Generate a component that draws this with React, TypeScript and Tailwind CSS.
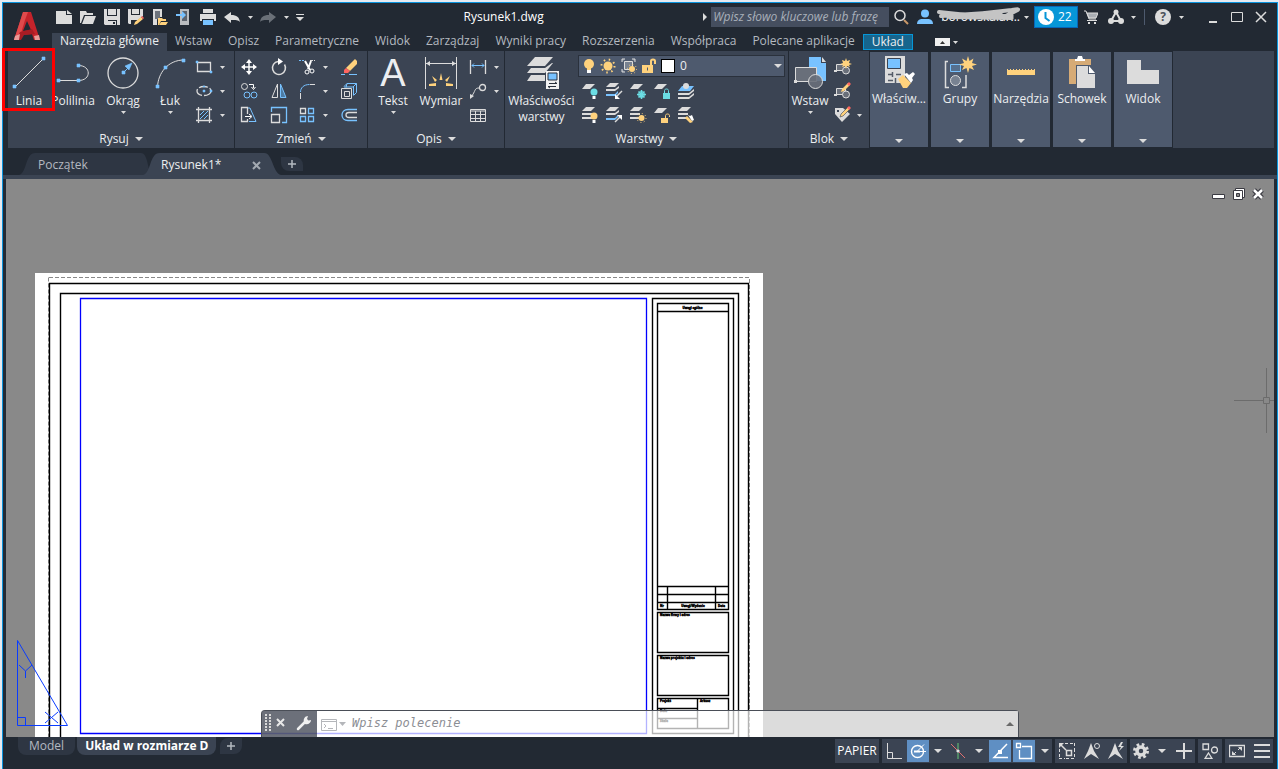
import type { ReactNode } from "react"

const L = "#dcdcdc"
const B = "#78c2ff"
const Y = "#ffd27d"
const R = "#ff6560"
const T = "#6bdde4"

type IconProps = { w?: number; h?: number; children: ReactNode }

function Icon({ w = 16, h = w, children }: IconProps) {
  return (
    <svg width={w} height={h} viewBox={`0 0 ${w} ${h}`} fill="none" stroke={L} aria-hidden="true" className="block shrink-0">
      {children}
    </svg>
  )
}

function Caret({ big = false }: { big?: boolean }) {
  return big ? (
    <Icon w={8} h={4}><path d="M0 0h8L4 4z" fill={L} stroke="none" /></Icon>
  ) : (
    <Icon w={5} h={3}><path d="M0 0h5L2.500 3z" fill={L} stroke="none" /></Icon>
  )
}

/* ---------- quick access ---------- */

const quickIcons: { label: string; icon: ReactNode }[] = [
  { label: "Nowy", icon: <Icon><path d="M0 2h10v4h6v9H0z" fill={L} stroke="none" /><path d="M11 1l5 4h-5z" fill={L} stroke="none" /></Icon> },
  { label: "Otwórz", icon: <Icon><path d="M0 2h6l1 2h6v2H4L1 14H0z" fill={L} stroke="none" /><path d="M5 7h11l-3 8H2z" fill={L} stroke="none" /></Icon> },
  { label: "Zapisz", icon: <Icon><path d="M0 0h3v7h10V0h3v16h-3v-5H4v5H1l-1-1z" fill={L} stroke="none" /><path d="M4 0h8v6H4zM4 12h8v4H4z" fill={L} stroke="none" /><path d="M9 13h2v2H9z" fill="#222933" stroke="none" /></Icon> },
  { label: "Zapisz jako", icon: <Icon><path d="M0 0h3v6h9V0h3v7l-5 4H3v4H1l-1-1z" fill={L} stroke="none" /><path d="M4 0h7v5H4z" fill={L} stroke="none" /><path d="M7 13l6-5 2 2-6 5-3 1z" fill={Y} stroke="none" /><path d="M13 8l1-1 2 2-1 1z" fill={R} stroke="none" /></Icon> },
  { label: "Otwórz z aplikacji", icon: <Icon><path d="M1 0h9v8H6l-1 3v5H1z" fill={L} stroke="none" /><path d="M3 2h5v8H3z" fill="#6d737c" stroke="none" /><path d="M6 9h4l1 1h3v2H9l-2 4H6z" fill={Y} stroke="none" /><path d="M9 13h7l-2 3H7z" fill={Y} stroke="none" /></Icon> },
  { label: "Zapisz w aplikacji", icon: <Icon><path d="M4 0h9v16H4z" fill="#b9bcc0" stroke="none" /><path d="M6 2h5v10H6z" fill="#5d646e" stroke="none" /><path d="M0 5h6V2l4 4-4 4V7H0z" fill={B} stroke="none" /></Icon> },
  { label: "Drukuj", icon: <Icon><path d="M3 0h10v4H3zM0 5h16v7h-2v-2H2v2H0z" fill={L} stroke="none" /><path d="M3 11h10v5H3z" fill={B} stroke="none" /></Icon> },
]

/* ---------- large ribbon icons ---------- */

const lineIcon = (
  <Icon w={34}><path d="M3 31L31 3" /><path d="M1 29h3v3H1zM30 1h3v3h-3z" fill={B} stroke={B} strokeWidth=".6" /></Icon>
)
const polylineIcon = (
  <Icon w={34}><path d="M2.500 24.500h20c13 0 13-15 0-15" /><path d="M1 23h3v3H1zM21 23h3v3h-3zM21 8h3v3h-3z" fill={B} stroke={B} strokeWidth=".6" /></Icon>
)
const circleIcon = (
  <Icon w={34}><circle cx="17" cy="17" r="15" strokeWidth="1.300" /><path d="M17 17l7-7" stroke={B} /><path d="M26 7l-7 3 4 4zM16 15h3v3h-3z" fill={B} stroke={B} strokeWidth=".6" /></Icon>
)
const arcIcon = (
  <Icon w={34}><path d="M4.500 31C5 17 15 4 31 4" /><path d="M3 29h3v3H3zM11 10h3v3h-3zM29 3h3v3h-3z" fill={B} stroke={B} strokeWidth=".6" /></Icon>
)
const dimensionIcon = (
  <Icon w={34}>
    <path d="M1.500 1v32M32.500 1v32" /><path d="M2 7.500h30" />
    <path d="M2 7.500l4-2.500v5zM32 7.500l-4-2.500v5z" fill={L} stroke="none" />
    <path d="M17 17l1.500 7h-3zM8 20l5 4-2 2zM26 20l-5 4 2 2zM5 28l7-1v3H5zM29 28l-7-1v3h7z" fill={Y} stroke="none" />
  </Icon>
)
const layerPropsIcon = (
  <Icon w={34}>
    <path d="M10 1h18l-8 9H2z" fill={L} stroke="none" />
    <path d="M6 12h14l7-5h1l-8 10H2z" fill={L} stroke="none" />
    <path d="M6 19h14v6H2z" fill={L} stroke="none" />
    <path d="M21 15h13v18H21z" fill="#f2f2f2" stroke="none" />
    <path d="M23 17h9v7h-9z" fill={B} stroke="#2a313c" />
    <path d="M24 27.500h8l-2-1.500M31 30.500h-8l2 1.500" stroke="#2a313c" />
  </Icon>
)
const insertIcon = (
  <Icon w={34}>
    <path d="M16 1h12v6h5v18H16z" fill={B} stroke="none" /><path d="M29 1l4 5h-4z" fill={L} stroke="none" />
    <path d="M2.500 11.500h21v14h-21z" fill="#696f7a" /><path d="M1 24h3v3H1z" fill={L} stroke="none" />
    <circle cx="22.500" cy="25.500" r="7" fill="#696f7a" fillOpacity=".9" />
  </Icon>
)

/* ---------- collapsed panels ---------- */

const collapsed: { label: string; icon: ReactNode }[] = [
  {
    label: "Właściw...",
    icon: (
      <Icon w={34}>
        <path d="M3 1h20v27H3z" fill={L} stroke="none" /><path d="M5.500 3.500h13v10h-13z" fill={B} stroke="#3b4453" />
        <path d="M6 19.500h5M14 19.500h5M6 25.500h5M10.500 17v5M13.500 23v5" stroke="#555c68" strokeWidth="1.500" />
        <path d="M16 24l5-4 8 8-4 5h-4z" fill={Y} stroke="none" />
        <path d="M22 19l3-1 2 2 4-3 2 2-3 4 1 2-2 3z" fill="#fff" stroke="none" />
      </Icon>
    ),
  },
  {
    label: "Grupy",
    icon: (
      <Icon w={34}>
        <path d="M5 6.500H2.500v26H6M19 32.500h4V20" strokeWidth="1.500" />
        <path d="M7.500 9.500h10v7h-10z" fill="#55708f" stroke={B} /><circle cx="12.500" cy="25.500" r="5" fill="#788291" />
        <path d="M25 1l1.500 5 4-2.500-1.500 4.500 5 1.500-5 1.500 2 4-4.500-2L25 18l-1.500-5-4.500 2 2-4-5-1.500 5-1.500-2-4.500 4.500 2.500z" fill={Y} stroke="none" />
      </Icon>
    ),
  },
  {
    label: "Narzędzia",
    icon: (
      <Icon w={34}>
        <path d="M3 15h28v5H3z" fill={Y} stroke="none" />
        <path d="M3.500 14v2M6.500 14v2M9.500 14v2M12.500 14v2M15.500 14v2M18.500 14v2M21.500 14v2M24.500 14v2M27.500 14v2M30.500 14v2" stroke={Y} />
      </Icon>
    ),
  },
  {
    label: "Schowek",
    icon: (
      <Icon w={34}>
        <path d="M4 4h22v6H11v19H4z" fill="#d6ab76" stroke="none" /><path d="M10 4h2l1-3h4l1 3h2v2H10z" fill="#fff" stroke="none" />
        <path d="M12 11h11v8h7v14H12z" fill={L} stroke="none" /><path d="M24 11l6 7h-6z" fill="#fff" stroke="none" />
      </Icon>
    ),
  },
  { label: "Widok", icon: <Icon w={34}><path d="M1 5h14v10h18v14H1z" fill={L} stroke="none" /></Icon> },
]

/* ---------- small ribbon icons ---------- */

type Tool = { label: string; icon: ReactNode; caret?: boolean }

const drawTools: Tool[] = [
  { label: "Prostokąt", caret: true, icon: <Icon w={18}><path d="M2.500 4.500h13v9h-13z" strokeWidth="1.300" /><path d="M1 3h2v2H1zM15 13h2v2h-2z" fill={B} stroke={B} strokeWidth=".5" /></Icon> },
  { label: "Elipsa", caret: true, icon: <Icon w={18}><ellipse cx="9" cy="9" rx="7" ry="4.500" strokeWidth="1.300" strokeDasharray="9 2" /><path d="M8 8h2v2H8zM15 8h2v2h-2zM8 4h2v1H8z" fill={B} stroke={B} strokeWidth=".5" /></Icon> },
  { label: "Kreskowanie", caret: true, icon: <Icon w={18}><path d="M1 3.500h16M1 14.500h16M3.500 1v16M14.500 1v16" strokeWidth="1.300" /><path d="M5 9l4-4M5 13l8-8M9 13l4-4" stroke={B} /></Icon> },
]

const modifyTools: Tool[] = [
  { label: "Przesuń", icon: <Icon w={18}><path d="M9 3v12M3 9h12" stroke="#fff" strokeWidth="1.500" /><path d="M9 1l3 4H6zM9 17l3-4H6zM1 9l4-3v6zM17 9l-4-3v6z" fill="#fff" stroke="none" /></Icon> },
  { label: "Obróć", icon: <Icon w={18}><path d="M8 3.500a6.500 6.500 0 1 0 6.500 3" strokeWidth="1.500" /><path d="M8 0l5 3.500L8 7z" fill="#fff" stroke="none" /></Icon> },
  { label: "Utnij", caret: true, icon: <Icon w={18}><path d="M1 2.500h6" stroke={B} strokeDasharray="2 1" /><path d="M12 2.500h5" strokeDasharray="3 1" /><path d="M7 3l5 9M13 3l-3 8" stroke="#fff" strokeWidth="2" /><circle cx="9" cy="14" r="2" stroke="#fff" /><circle cx="14" cy="13" r="2" stroke="#fff" /></Icon> },
  { label: "Wymaż", icon: <Icon w={18}><path d="M6 10L15 1l2 2v3l-7 7z" fill={Y} stroke="none" /><path d="M4 12l2-2 4 3-2 2H4z" fill={R} stroke="none" /><path d="M1 16.500h4M9 16.500h8" stroke={B} /></Icon> },
  { label: "Kopiuj", icon: <Icon w={18}><circle cx="4.500" cy="4.500" r="3" /><path d="M9 2.500h4.500V6M11.500 5l2 2.500 2-2.500" stroke="#fff" /><circle cx="7" cy="13" r="3" stroke={B} /><circle cx="14" cy="13" r="3" stroke={B} /></Icon> },
  { label: "Lustro", icon: <Icon w={18}><path d="M7.500 2v13.500H2z" /><path d="M10.500 2v13.500H16z" stroke={B} fill="#4d7ba3" /></Icon> },
  { label: "Zaokrąglij", caret: true, icon: <Icon w={18}><path d="M2.500 17v-6M12 2.500h5" /><path d="M2.500 10c0-4 3-7.500 9-7.500" stroke={B} /></Icon> },
  { label: "Rozbij", icon: <Icon w={18}><path d="M1.500 6.500h10v10h-10zM4.500 9.500h5v5h-5z" /><path d="M4 4.500L7 1.500h9.500v9l-3 3M13 5l3.500-3.500M7 1.500l-1 4M13.500 13V5H4" stroke={B} /></Icon> },
  { label: "Rozciągnij", icon: <Icon w={18}><path d="M7.500 8V1.500h-6v14h6V13" strokeWidth="1.300" /><path d="M8 2h2l6 13.500H9" stroke={B} /><path d="M5 10.500h6M9 8l3 2.500L9 13" stroke="#fff" /></Icon> },
  { label: "Skala", icon: <Icon w={18}><path d="M1.500 8.500h8v8h-8z" strokeWidth="1.300" /><path d="M1.500 6V1.500h15v15H12" stroke={B} strokeWidth="1.300" /></Icon> },
  { label: "Szyk", caret: true, icon: <Icon w={18}><path d="M2.500 2.500h5v5h-5z" strokeWidth="1.300" /><path d="M10.500 2.500h5v5h-5zM2.500 10.500h5v5h-5zM10.500 10.500h5v5h-5z" stroke={B} strokeWidth="1.300" /></Icon> },
  { label: "Odsuń", icon: <Icon w={18}><path d="M17 3.500H8c-8 0-8 11 0 11h9" stroke={B} strokeWidth="1.300" /><path d="M17 6.500H9c-4 0-4 5 0 5h8" strokeWidth="1.300" /></Icon> },
]

const annotationTools: Tool[] = [
  { label: "Liniowy", caret: true, icon: <Icon w={18}><path d="M1.500 2v14M16.500 2v14" strokeWidth="1.300" /><path d="M3 7.500h12M5 5.500l-2 2 2 2M13 5.500l2 2-2 2" stroke={B} /></Icon> },
  { label: "Linia odniesienia", caret: true, icon: <Icon w={18}><circle cx="13.500" cy="5.500" r="3" strokeWidth="1.300" /><path d="M10 6C5 6 7 9 2 15" /><path d="M1 17v-5l4 2z" fill={L} stroke="none" /></Icon> },
  { label: "Tabela", icon: <Icon w={18}><path d="M1.500 3.500h15v12h-15zM1.500 5h15M1.500 8.500h15M1.500 12.500h15M6.500 5v11M11.500 5v11" /></Icon> },
]

const sheet = <path d="M5 2h9l-5 5H1z" fill={L} stroke="none" />
const stack = <path d="M5 1h9l-4 4H1zM1 7h10v2H1zM1 11h10v2H1z" fill={L} stroke="none" />

const layerTools: Tool[][] = [
  [
    { label: "Wyłącz", icon: <Icon w={18}>{sheet}<circle cx="13" cy="10" r="3.500" fill={T} stroke="none" /><path d="M11.500 14h3v3h-3z" fill="#fff" stroke="none" /></Icon> },
    { label: "Izoluj", icon: <Icon w={18}><path d="M5 1h9l-4 4H1zM1 7h9l4-3v2l-4 3H1z" fill={L} stroke="none" /><path d="M1 12h9l3-3v2l-3 3H1z" fill={B} stroke="none" /><path d="M17 9l-6 6" strokeWidth="1.500" /><path d="M10 17v-5l5 5z" fill="#fff" stroke="none" /></Icon> },
    { label: "Zablokuj", icon: <Icon w={18}>{sheet}<path d="M12.500 8v9M8 12.500h9M9.500 9.500l6 6M15.500 9.500l-6 6" stroke={T} strokeWidth="1.500" /><circle cx="12.500" cy="12.500" r="3" stroke={T} /></Icon> },
    { label: "Zamknij", icon: <Icon w={18}>{sheet}<path d="M10 11h7v6h-7z" fill={T} stroke="none" /><path d="M11.500 11V8.500c0-2 4-2 4 0V11" stroke={T} /></Icon> },
    { label: "Ustaw aktualną", icon: <Icon w={18}><path d="M5 4h12l-4 5H1z" fill={B} stroke="none" /><circle cx="9" cy="4" r="3" fill={L} stroke="none" /><path d="M1 11h11l5-4v2l-5 4H1zM1 15h11l5-4v2l-5 4H1z" fill={L} stroke="none" /></Icon> },
  ],
  [
    { label: "Włącz wszystkie", icon: <Icon w={18}>{stack}<circle cx="13" cy="10" r="3.500" fill={Y} stroke="none" /><path d="M11.500 14h3v3h-3z" fill="#fff" stroke="none" /></Icon> },
    { label: "Usuń izolację", icon: <Icon w={18}><path d="M5 1h9l-4 4H1zM1 7h9l4-3v2l-4 3H1z" fill={L} stroke="none" /><path d="M1 12h9l3-3v2l-3 3H1z" fill={B} stroke="none" /><path d="M10 16l6-6" strokeWidth="1.500" /><path d="M17 9v5l-5-5z" fill="#fff" stroke="none" /></Icon> },
    { label: "Odblokuj wszystkie", icon: <Icon w={18}>{stack}<circle cx="12.500" cy="12" r="3" fill={Y} stroke="none" /><circle cx="12.500" cy="12" r="4.500" stroke={Y} strokeDasharray="1 2.500" /></Icon> },
    { label: "Otwórz warstwę", icon: <Icon w={18}>{sheet}<path d="M8 12h7v5H8z" fill={Y} stroke="none" /><path d="M12.500 12V9.500c0-2 4-2 4 0V11" stroke={Y} /></Icon> },
    { label: "Dopasuj warstwę", icon: <Icon w={18}>{stack}<path d="M8 12l2-2 6 6-3 1z" fill={Y} stroke="none" /><path d="M11 9l2 1 2-1 2 5-2 1z" fill="#fff" stroke="none" /></Icon> },
  ],
]

const blockBase = (
  <>
    <path d="M2.500 6.500h9v6h-9z" fill="#696f7a" /><circle cx="12" cy="12.500" r="3.500" fill="#696f7a" /><path d="M0 12h3v2H0z" fill={L} stroke="none" />
  </>
)
const blockTools: Tool[] = [
  { label: "Utwórz", icon: <Icon w={18}>{blockBase}<path d="M12 0l1 3 3-1-1 3 3 1-3 1 1 2-3-1-1 3-1-3-3 1 1-2-3-1 3-1-1-3 3 1z" fill={Y} stroke="none" /></Icon> },
  { label: "Edytor bloków", icon: <Icon w={18}>{blockBase}<path d="M8 7l6-6 2 2-6 6-3 1z" fill={Y} stroke="none" /><path d="M13 2l2-2 2 2-2 2z" fill={R} stroke="none" /></Icon> },
  { label: "Edycja atrybutów", caret: true, icon: <Icon w={18}><path d="M1 2h8l7 6-8 8-7-8z" fill={L} stroke="none" /><path d="M3 4h2v2H3z" fill="#3b4453" stroke="none" /><path d="M7 8l7-7 2 2-7 7-3 1z" fill={Y} stroke="#3b4453" strokeWidth=".6" /><path d="M13 2l2-2 2 2-2 2z" fill={R} stroke="none" /></Icon> },
]

/* ---------- ribbon pieces ---------- */

function SmallTool({ label, icon, caret, className = "w-7" }: Tool & { className?: string }) {
  return (
    <div className="flex h-6 items-center">
      <button type="button" aria-label={label} className={`flex h-6 items-center justify-center ${className}`}>{icon}</button>
      {caret && <button type="button" aria-label={`${label}: więcej`} className="flex h-6 w-2 items-center justify-center"><Caret /></button>}
    </div>
  )
}

function BigTool({ label, icon, caret, className }: { label: ReactNode; icon: ReactNode; caret?: boolean; className: string }) {
  return (
    <button type="button" className={`flex shrink-0 flex-col items-center pt-1 leading-4 ${className}`}>
      <span className="flex h-9 items-center justify-center">{icon}</span>
      <span className="mt-0.5 whitespace-nowrap">{label}</span>
      {caret && <span className="mt-0.5"><Caret /></span>}
    </button>
  )
}

function Panel({ title, className, children }: { title: string; className: string; children: ReactNode }) {
  return (
    <section className={`flex shrink-0 flex-col bg-[#3b4453] ${className}`}>
      <div className="flex flex-1">{children}</div>
      <button type="button" className="flex h-[18px] items-center justify-center gap-1.5 leading-4">
        {title}
        <Caret big />
      </button>
    </section>
  )
}

function Ribbon() {
  return (
    <div className="relative flex h-[97px] gap-px pl-[5px] pr-[3px] text-[#eceef0]">
      <Panel title="Rysuj" className="w-[226px]">
        <BigTool label="Linia" icon={lineIcon} className="w-[42px]" />
        <BigTool label="Polilinia" icon={polylineIcon} className="w-[46px]" />
        <BigTool label="Okrąg" icon={circleIcon} caret className="w-[54px]" />
        <BigTool label="Łuk" icon={arcIcon} caret className="w-10" />
        <div className="pt-1">{drawTools.map((t) => <SmallTool key={t.label} {...t} />)}</div>
      </Panel>

      <Panel title="Zmień" className="w-[132px]">
        <div className="grid auto-rows-[24px] grid-cols-[30px_28px_42px_28px] pt-1">
          {modifyTools.map((t) => <SmallTool key={t.label} {...t} />)}
        </div>
      </Panel>

      <Panel title="Opis" className="w-[136px]">
        <BigTool label="Tekst" icon={<span aria-hidden="true" className="font-['Liberation_Sans',sans-serif] text-[38px] leading-9">A</span>} caret className="w-[50px]" />
        <BigTool label="Wymiar" icon={dimensionIcon} className="w-[46px]" />
        <div className="pt-1">{annotationTools.map((t) => <SmallTool key={t.label} {...t} />)}</div>
      </Panel>

      <Panel title="Warstwy" className="w-[283px]">
        <BigTool label={<>Właściwości<br />warstwy</>} icon={layerPropsIcon} className="w-[73px]" />
        <div className="flex flex-1 flex-col pr-[3px] pt-1">
          <div className="mb-0.5 flex h-[22px] items-center gap-[5px] border border-[#2a313c] bg-[#4e5a6e] pl-1 pr-0.5">
            <Icon w={12} h={16}><circle cx="6" cy="6" r="5" fill={Y} stroke="none" /><path d="M4 10h4v2H4z" fill={Y} stroke="none" /><path d="M4 12h4v3H4z" fill="#fff" stroke="none" /></Icon>
            <Icon><circle cx="8" cy="8" r="4.500" fill={Y} stroke="none" /><circle cx="8" cy="8" r="6.500" stroke={Y} strokeDasharray="1.500 3.600" strokeWidth="2" /></Icon>
            <Icon><path d="M1 4V1h3M11 1h3v3M1 11v3h3M3.500 3.500h8v8h-8z" fill="#788291" /><circle cx="11" cy="11" r="3" fill={Y} stroke="none" /><circle cx="11" cy="11" r="4.500" stroke={Y} strokeDasharray="1 2.500" /></Icon>
            <Icon w={14} h={16}><path d="M0 7h11v8H0z" fill={Y} stroke="none" /><path d="M9 7V3c0-2 4-2 4 0v3" stroke={Y} strokeWidth="2" /><path d="M5.500 9.500v3" stroke="#4e5a6e" /></Icon>
            <span className="size-3.5 border border-black bg-white" />
            <select aria-label="Warstwa" className="h-5 min-w-0 flex-1 appearance-none bg-transparent leading-5 outline-none">
              <option>0</option>
            </select>
            <Caret big />
          </div>
          {layerTools.map((row, i) => (
            <div key={i} className="flex">
              {row.map((t) => <SmallTool key={t.label} {...t} className="w-6" />)}
            </div>
          ))}
        </div>
      </Panel>

      <Panel title="Blok" className="w-20">
        <BigTool label="Wstaw" icon={insertIcon} caret className="w-[42px]" />
        <div className="pt-1">{blockTools.map((t) => <SmallTool key={t.label} {...t} className="w-6" />)}</div>
      </Panel>

      <div className="flex gap-[3px] pt-px pb-px">
        {collapsed.map((p) => (
          <button key={p.label} type="button" className="flex w-[58px] flex-col items-center bg-[#4e5a6e] pt-[3px] leading-4">
            {p.icon}
            <span className="mt-0.5 whitespace-nowrap">{p.label}</span>
            <span className="mt-auto mb-1"><Caret big /></span>
          </button>
        ))}
      </div>
      <div className="flex-1 bg-[#3b4453]" />

      <div className="pointer-events-none absolute -left-px -top-[3px] h-[63px] w-[53px] border-[3px] border-[#ff0000]" />
    </div>
  )
}

/* ---------- title bar ---------- */

const ribbonTabs = ["Narzędzia główne", "Wstaw", "Opisz", "Parametryczne", "Widok", "Zarządzaj", "Wyniki pracy", "Rozszerzenia", "Współpraca", "Polecane aplikacje"]

function Header() {
  return (
    <header className="flex h-12 pl-[5px]">
      <button type="button" aria-label="Menu aplikacji" className="flex w-11 justify-start pl-1.5 pt-2">
        <Icon w={28} h={30}>
          <path d="M9 1h8l9 28h-6l-2-6-9 1-3 5H0z" fill="#c5232b" stroke="none" />
          <path d="M9 1h5l-3 8-6 20H0z" fill="#e04a4c" stroke="none" />
          <path d="M13 10l4 9-8 1z" fill="#222933" stroke="none" />
          <path d="M6 21l12-3 3 5-11 1-3 5H2z" fill="#a81c24" stroke="none" />
          <path d="M1 25l5-2-1 6H0zM20 25l5-1 1 5h-5z" fill="#e99a98" stroke="none" />
        </Icon>
      </button>
      <div className="flex min-w-0 flex-1 flex-col">
        <div className="flex h-[30px] items-center pb-0.5 text-white">
          {quickIcons.map((q) => (
            <button key={q.label} type="button" aria-label={q.label} className="flex w-6 justify-center">{q.icon}</button>
          ))}
          <button type="button" aria-label="Cofnij" className="flex w-6 justify-center"><Icon><path d="M0 8l7-5v3c6 0 8 2 9 7-2-2-4-2-9-2v3z" fill={L} stroke="none" /></Icon></button>
          <button type="button" aria-label="Lista cofnięć" className="flex w-3 justify-center"><Caret /></button>
          <button type="button" aria-label="Ponów" className="flex w-6 justify-center"><Icon><path d="M16 8L9 3v3c-6 0-8 2-9 7 2-2 4-2 9-2v3z" fill="#6a7078" stroke="none" /></Icon></button>
          <button type="button" aria-label="Lista ponowień" className="flex w-3 justify-center"><Caret /></button>
          <button type="button" aria-label="Dostosuj" className="flex w-4 justify-center"><Icon w={8}><path d="M0 1.500h8" /><path d="M0 4h8L4 8z" fill={L} stroke="none" /></Icon></button>

          <h1 className="flex-1 text-center leading-4">Rysunek1.dwg</h1>

          <Icon w={12}><path d="M4 2l4 4-4 4z" fill={L} stroke="none" /></Icon>
          <input aria-label="Szukaj" placeholder="Wpisz słowo kluczowe lub frazę" className="h-5 w-[178px] bg-[#454e5f] px-0.5 italic leading-5 outline-none placeholder:text-[#a9b0ba]" />
          <button type="button" aria-label="Znajdź" className="flex w-6 justify-center"><Icon><circle cx="7" cy="6.500" r="5" strokeWidth="1.500" /><path d="M11 11l4 4" stroke="#c99868" strokeWidth="2" /></Icon></button>
          <button type="button" className="flex items-center">
            <span className="flex w-6 justify-center"><Icon><circle cx="8" cy="4.500" r="4" fill={B} stroke="none" /><path d="M0 15c0-4 3-5 5-5h6c2 0 5 1 5 5z" fill={B} stroke="none" /></Icon></span>
            <span className="relative whitespace-nowrap pl-1 text-left leading-5">
              borowskalar...
              <svg viewBox="0 0 82 14" preserveAspectRatio="none" fill="none" stroke="#c4c4c4" strokeWidth="4" strokeLinecap="round" className="absolute left-0 top-0 h-3.5 w-full" aria-hidden="true">
                <path d="M2 5l28 3 44-5c7-1 8-1 4 1l-12 6M4 9l60-4M12 10l62 1M34 7l40 2" />
              </svg>
            </span>
            <span className="flex w-3 justify-center"><Caret /></span>
          </button>
          <button type="button" aria-label="Pozostało dni: 22" className="ml-0.5 flex h-[22px] w-11 items-center gap-1 border border-[#0766b8] bg-[#0696d7] pl-[3px] leading-4">
            <Icon><circle cx="8" cy="8" r="8" fill="#fff" stroke="none" /><path d="M7.500 3v6l4 3" stroke="#0696d7" strokeWidth="2" /></Icon>
            22
          </button>
          <button type="button" aria-label="Sklep" className="flex w-[26px] justify-center"><Icon w={14}><path d="M0 1h2l3 8h7" /><path d="M3 3h11l-2 5H5z" fill="#a9adb3" stroke={L} /><path d="M3 10.500h10" /><path d="M4 12h2v2H4zM10 12h2v2h-2z" fill={L} stroke="none" /></Icon></button>
          <button type="button" aria-label="Autodesk App Store" className="flex w-6 justify-center"><Icon><path d="M8 3L3 12h10z" strokeWidth="2" /><circle cx="8" cy="3" r="2.500" fill={L} stroke="none" /><circle cx="3" cy="12" r="3" fill={L} stroke="none" /><circle cx="13" cy="12" r="3" fill={L} stroke="none" /></Icon></button>
          <button type="button" aria-label="Aplikacje" className="flex w-2.5 justify-center"><Caret /></button>
          <span className="mx-1.5 h-4 w-px bg-[#4e5a6e]" />
          <button type="button" aria-label="Pomoc" className="flex w-6 justify-center"><span className="flex size-4 items-center justify-center rounded-full bg-[#dcdcdc] font-bold leading-4 text-[#4b515a]">?</span></button>
          <button type="button" aria-label="Menu pomocy" className="flex w-3 justify-center"><Caret /></button>
          <button type="button" aria-label="Minimalizuj" className="ml-3.5 flex w-6 justify-center"><Icon w={12}><path d="M2 11h8" strokeWidth="2" /></Icon></button>
          <button type="button" aria-label="Maksymalizuj" className="flex w-6 justify-center"><Icon w={12}><path d="M.5 1.500h11v9H.5z" /></Icon></button>
          <button type="button" aria-label="Zamknij" className="mr-1 flex w-6 justify-center"><Icon w={12}><path d="M1 1l10 10M11 1L1 11" strokeWidth="1.500" /></Icon></button>
        </div>
        <nav className="flex h-[18px] items-center whitespace-nowrap leading-4 text-[#b4b9c0]">
          {ribbonTabs.map((t, i) => (
            <a key={t} href="#" className={i === 0 ? "h-full bg-[#3b4453] px-2 text-[#eceef0]" : "h-full px-2"}>{t}</a>
          ))}
          <a href="#" className="h-4 border border-[#0696d7] bg-[#17658d] px-2 leading-[14px] text-[#eceef0]">Układ</a>
          <button type="button" aria-label="Zwiń wstążkę" className="ml-[22px] flex h-2 w-[15px] items-center justify-center bg-[#f0f0f0]"><Icon w={5} h={3}><path d="M0 3h5L2.500 0z" fill="#333" stroke="none" /></Icon></button>
          <button type="button" aria-label="Opcje wstążki" className="flex w-3 justify-center"><Caret /></button>
        </nav>
      </div>
    </header>
  )
}

/* ---------- document tabs ---------- */

function FileTabs() {
  return (
    <div className="flex h-[31px] items-end border-b-4 border-[#3b4453] pl-4 leading-4 text-[#b4b9c0]">
      <div className="relative flex h-[22px] w-[134px] items-center pt-0.5">
        <svg viewBox="0 0 132 22" preserveAspectRatio="none" className="absolute inset-0 h-full w-full" aria-hidden="true"><path d="M0 22C8 20 6 0 16 0h104c8 0 6 20 12 22z" fill="#2e3643" /></svg>
        <a href="#" className="relative pl-[19px]">Początek</a>
      </div>
      <div className="relative -ml-2.5 flex h-[22px] w-[138px] items-center pt-0.5">
        <svg viewBox="0 0 132 22" preserveAspectRatio="none" className="absolute inset-0 h-full w-full" aria-hidden="true"><path d="M0 22C8 20 6 0 16 0h100c8 0 8 20 16 22z" fill="#3b4453" /></svg>
        <a href="#" className="relative flex-1 pl-[18px] text-[#eceef0]">Rysunek1*</a>
        <button type="button" aria-label="Zamknij kartę" className="relative mr-5"><Icon w={9}><path d="M1 1l7 7M8 1L1 8" stroke="#a3a9b1" strokeWidth="2" /></Icon></button>
      </div>
      <button type="button" aria-label="Nowy rysunek" className="relative mb-1 flex h-3.5 w-[22px] items-center justify-center rounded-tr-lg rounded-bl-lg bg-[#2e3643]">
        <Icon w={8}><path d="M4 0v8M0 4h8" stroke="#b4b9c0" strokeWidth="1.500" /></Icon>
      </button>
    </div>
  )
}

/* ---------- drawing area ---------- */

function Drawing() {
  return (
    <svg className="absolute inset-0 h-full w-full" role="img" aria-label="Układ w rozmiarze D">
      <g transform="translate(-6 -179)" fill="none" stroke="#000">
        <path d="M35 273h728v600H35z" fill="#fff" stroke="none" />
        <path d="M49 277.500h700.500V860M48.500 277.500V860" stroke="#888" strokeDasharray="4 2" />
        <path d="M49.500 860V283.500h699V860M60.500 860V293.500h678V860" strokeWidth="1.400" />
        <path d="M80.500 298.500h566v435h-566z" stroke="#0000ff" strokeWidth="1.300" />
        <g strokeWidth="1.400">
          <path d="M652.500 298.500h81v435h-81z" />
          <path d="M657.500 303.500h71v306h-71zM657.500 311.500h71M657.500 586.500h71M657.500 594.500h71M657.500 602.500h71M667.500 586.500v23M715.500 586.500v23" />
          <path d="M657.500 612.500h71v40h-71zM657.500 655.500h71v40h-71zM657.500 698.500h71v30h-71zM697.500 698.500v30M657.500 708.500h40M657.500 718.500h40" />
        </g>
        <g fill="#000" stroke="#000" strokeWidth=".4" fontSize="3" fontWeight="700">
          <text x="692.500" y="309" textAnchor="middle">Uwagi ogólne</text>
          <text x="662" y="607" textAnchor="middle">Nr</text>
          <text x="693" y="607" textAnchor="middle">Uwagi/Wydanie</text>
          <text x="721.500" y="607" textAnchor="middle">Data</text>
          <text x="660" y="616">Nazwa firmy i adres</text>
          <text x="660" y="659">Nazwa projektu i adres</text>
          <text x="660" y="702">Projekt</text>
          <text x="700" y="702">Arkusz</text>
          <text x="660" y="712">Data</text>
          <text x="660" y="722">Skala</text>
        </g>
        <g stroke="#0a3cff">
          <path d="M17.500 640.500v85h50zM17.500 717.500h8v8" />
          <path d="M19 665l6.500 6M32 665l-6.500 6v7M45 712l13 11M58 712l-13 11" />
        </g>
      </g>
    </svg>
  )
}

function Crosshair() {
  return (
    <div className="absolute right-0 top-[188px]">
      <Icon w={40} h={66}>
        <path d="M0 33.500h29M36 33.500h4M32.500 1v29M32.500 37v29M29.500 30.500h6v6h-6z" stroke="#6c6c6c" />
      </Icon>
    </div>
  )
}

function Canvas() {
  return (
    <main className="relative mx-[3px] min-h-0 flex-1 overflow-hidden bg-[#898989]">
      <Drawing />
      <Crosshair />
      <div className="absolute right-2.5 top-2 flex gap-[7px]">
        <button type="button" aria-label="Minimalizuj rysunek"><Icon w={13} h={14}><path d="M.5 7.500h12v4H.5z" fill="#fff" stroke="#3a3a42" /></Icon></button>
        <button type="button" aria-label="Przywróć rysunek"><Icon w={13} h={14}><path d="M3.500 1.500h9v9h-9z" fill="#fff" stroke="#3a3a42" /><path d="M1.500 3.500h9v9h-9z" fill="#fff" stroke="#3a3a42" /><path d="M4.500 6.500h3v3h-3z" fill="#898989" stroke="#3a3a42" /></Icon></button>
        <button type="button" aria-label="Zamknij rysunek"><Icon w={12} h={14}><path d="M2 3l8 8M10 3l-8 8" stroke="#3a3a42" strokeWidth="5" /><path d="M2 3l8 8M10 3l-8 8" stroke="#fff" strokeWidth="2.500" /></Icon></button>
      </div>
      <form className="absolute bottom-0 left-[255px] flex h-[27px] w-[758px] rounded-t-sm border border-b-0 border-[#4a4e57]">
        <div className="flex w-[55px] items-center bg-[#5c616c]/90 pl-[3px] pb-1">
          <Icon w={6} h={17}><path d="M1 0v17M5 0v17" stroke="#d8d8d8" strokeWidth="2" strokeDasharray="2 1" /></Icon>
          <button type="button" aria-label="Zamknij wiersz poleceń" className="ml-[5px]"><Icon w={9}><path d="M1 1l7 7M8 1L1 8" stroke="#e8e8e8" strokeWidth="2" /></Icon></button>
          <button type="button" aria-label="Dostosuj wiersz poleceń" className="ml-2.5"><Icon w={18}><path d="M3 16l8-8" stroke="#f0f0f0" strokeWidth="2.500" strokeLinecap="round" /><path d="M9 9C8 6 10 3 13 3l-1 3 1.500 1.500L16 7c0 3-3 5-6 4z" fill="#f0f0f0" stroke="none" /></Icon></button>
        </div>
        <div className="flex flex-1 items-center bg-white/70 px-1">
          <button type="button" aria-label="Ostatnie polecenia" className="flex items-center gap-0.5">
            <Icon w={16} h={13}><path d="M.5 1.500h15v11H.5zM.5 3.500h15M3 6l2 2-2 2M7 10.500h5" stroke="#b4b6ba" /></Icon>
            <Icon w={7} h={4}><path d="M0 0h7L3.500 4z" fill="#b4b6ba" stroke="none" /></Icon>
          </button>
          <input aria-label="Wiersz poleceń" placeholder="Wpisz polecenie" className="ml-1 min-w-0 flex-1 bg-transparent pb-0.5 pl-0.5 font-['DejaVu_Sans_Mono',monospace] italic leading-5 outline-none placeholder:text-[#8c8e94]" />
          <Icon w={8} h={4}><path d="M0 4h8L4 0z" fill="#6a6a6a" stroke="none" /></Icon>
        </div>
      </form>
    </main>
  )
}

/* ---------- status bar ---------- */

function StatusButton({ label, on = false, children, className = "w-6" }: { label: string; on?: boolean; children: ReactNode; className?: string }) {
  return (
    <button type="button" aria-label={label} aria-pressed={on} className={`flex h-[22px] items-center justify-center ${on ? "bg-[#5f8fc3]" : ""} ${className}`}>
      {children}
    </button>
  )
}

function StatusGroup({ children }: { children: ReactNode }) {
  return <div className="flex h-6 items-center gap-0.5 bg-[#3b4453]">{children}</div>
}

function StatusBar() {
  return (
    <footer className="flex h-8 items-start justify-between pr-1">
      <nav className="flex h-[18px] items-center pl-[15px] leading-[18px]">
        <a href="#" className="rounded-b-lg bg-[#2e3643] px-[11px] text-[#b4b9c0]">Model</a>
        <a href="#" className="ml-0.5 whitespace-nowrap rounded-b-lg bg-[#3b4453] px-2 font-bold text-white">Układ w rozmiarze D</a>
        <button type="button" aria-label="Nowy układ" className="ml-1 flex h-4 w-[22px] items-center justify-center rounded-br-lg rounded-tl-lg bg-[#2e3643]">
          <Icon w={8}><path d="M4 0v8M0 4h8" stroke="#b4b9c0" strokeWidth="1.500" /></Icon>
        </button>
      </nav>
      <div className="flex gap-[3px] pt-0.5">
        <StatusGroup><button type="button" className="w-11 text-center leading-4 text-white">PAPIER</button></StatusGroup>
        <StatusGroup>
          <StatusButton label="Orto" className="w-[23px]"><Icon><path d="M1.500 0v15.500H16M1.500 9.500h5v6" /></Icon></StatusButton>
          <StatusButton label="Śledzenie biegunowe" on className="w-[22px]"><Icon w={18}><circle cx="8.500" cy="9.500" r="6" stroke="#fff" strokeWidth="1.400" /><path d="M8 9.500h9M8 9.500l7-7" stroke="#fff" /><path d="M5 9.500h6" stroke="#fff" strokeWidth="2" /></Icon></StatusButton>
          <StatusButton label="Kąty" className="w-3.5"><Caret big /></StatusButton>
          <StatusButton label="Szkic izometryczny" className="w-[22px]"><Icon w={18}><path d="M2 2l6 6M10 10l6 6" stroke="#e07070" /><path d="M9 1v6M9 11v6" stroke="#67c977" /><path d="M8 8h2v2H8z" fill="#fff" /></Icon></StatusButton>
          <StatusButton label="Rzuty" className="w-4"><Caret big /></StatusButton>
          <StatusButton label="Śledzenie obiektów" on className="w-[22px]"><Icon w={18}><path d="M16 2L3 15.500h14" stroke="#fff" strokeWidth="1.500" /><path d="M7 8h4v4H7z" fill="#fff" stroke="none" /></Icon></StatusButton>
          <StatusButton label="Lokalizacja względem obiektu" on className="w-[22px]"><Icon w={18}><path d="M7 4.500h9.500v12h-12V8M1.500 1.500h4v4h-4z" stroke="#fff" strokeWidth="1.300" /></Icon></StatusButton>
          <StatusButton label="Punkty charakterystyczne" className="w-[15px]"><Caret big /></StatusButton>
        </StatusGroup>
        <StatusGroup>
          <StatusButton label="Obiekty opisowe"><Icon w={18}><path d="M7 1.500h10M16.500 1v6M1.500 7v10M1 16.500h6M16.500 7v9.500H8" strokeDasharray="3 2" /><path d="M8.500 8.500h5v5h-5z" strokeWidth="1.500" /><path d="M2 2l6 6" strokeWidth="1.500" /><path d="M1 1h5L1 6z" fill={L} stroke="none" /></Icon></StatusButton>
          <StatusButton label="Widoczność opisów" className="w-[22px]"><Icon w={18}><path d="M8 1l3 8 5 8-8-5-7 5 4-8z" fill={L} stroke="none" /><circle cx="14" cy="4" r="2.500" /></Icon></StatusButton>
          <StatusButton label="Automatyczna skala" className="w-[22px]"><Icon w={18}><path d="M8 1l3 8 5 8-8-5-7 5 4-8z" fill={L} stroke="none" /><path d="M14 0l-3 5h3l-2 4 5-5h-3l2-4z" fill={L} stroke="none" /></Icon></StatusButton>
        </StatusGroup>
        <StatusGroup>
          <StatusButton label="Obszar roboczy" className="w-[22px]"><Icon><circle cx="8" cy="8" r="4" strokeWidth="3.500" /><circle cx="8" cy="8" r="6.500" strokeWidth="3" strokeDasharray="2.600 2.500" /></Icon></StatusButton>
          <StatusButton label="Lista obszarów roboczych" className="w-4"><Caret big /></StatusButton>
          <StatusButton label="Monitor opisów" className="w-[23px]"><Icon><path d="M8 0v16M0 8h16" strokeWidth="2" /></Icon></StatusButton>
        </StatusGroup>
        <StatusGroup><StatusButton label="Izoluj obiekty"><Icon><path d="M1 1h5.500v5.500H1zM6.500 10l3.500 5.500H3z" strokeWidth="1.300" /><circle cx="12.500" cy="7" r="3" strokeWidth="1.300" /></Icon></StatusButton></StatusGroup>
        <StatusGroup>
          <StatusButton label="Czysty ekran" className="w-[23px]"><Icon><path d="M.5 2.500h15v11H.5z" strokeWidth="1.300" /><path d="M9 7l3-3M4 12l3-3" /><path d="M9 4h4v4zM3 8v4h4z" fill={L} stroke="none" /></Icon></StatusButton>
          <StatusButton label="Dostosowywanie" className="w-[23px]"><Icon><path d="M0 2h16M0 8h16M0 14h16" strokeWidth="2" /></Icon></StatusButton>
        </StatusGroup>
      </div>
    </footer>
  )
}

export default function App() {
  return (
    <div className="h-screen overflow-hidden bg-[#e6eaf1] pl-0.5 pr-px pt-0.5">
      <div className="flex h-full min-w-0 flex-col border border-b-0 border-[#0a93dc] bg-[#222933] font-['Open_Sans',sans-serif] text-xs">
        <Header />
        <Ribbon />
        <FileTabs />
        <Canvas />
        <StatusBar />
      </div>
    </div>
  )
}
